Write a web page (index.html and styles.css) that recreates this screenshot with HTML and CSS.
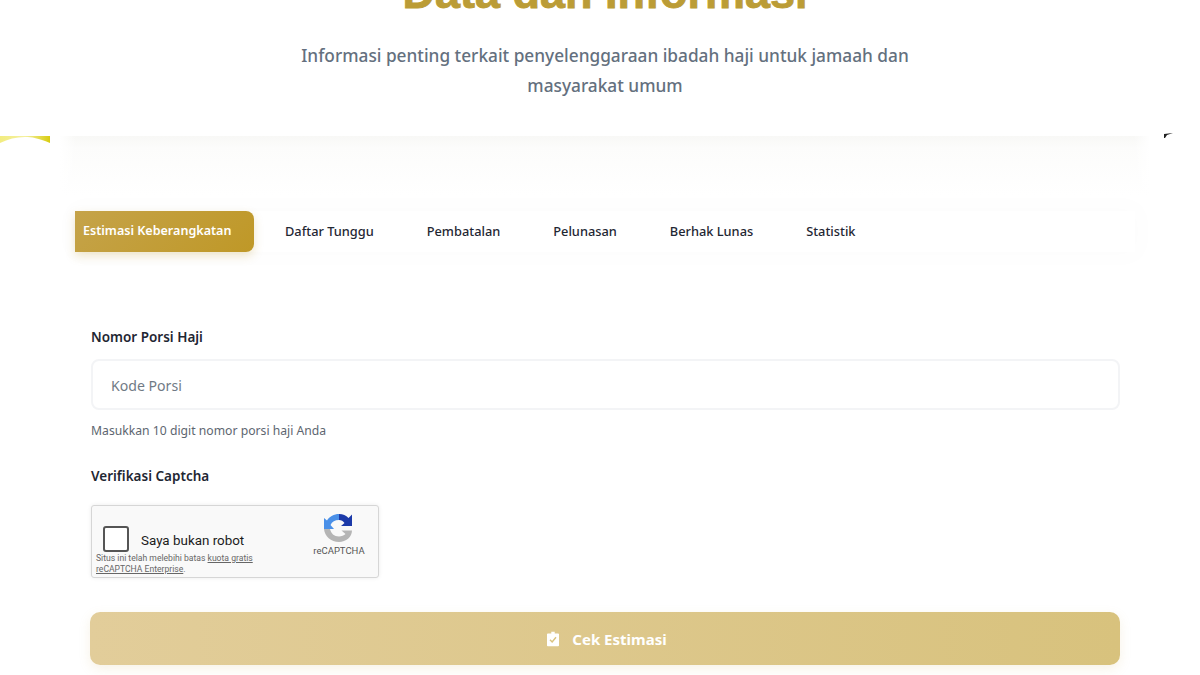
FILE: index.html
```html
<!DOCTYPE html>
<html lang="id">
<head>
<meta charset="utf-8">
<title>Data dan Informasi</title>
<link rel="stylesheet" href="styles.css">
</head>
<body>
<header class="hero">
  <h1 class="hero-title">Data dan Informasi</h1>
  <p class="hero-sub">Informasi penting terkait penyelenggaraan ibadah haji untuk jamaah dan<br>masyarakat umum</p>
</header>
<svg class="wave wave-left" width="50" height="9" viewBox="0 0 50 9"><defs><linearGradient id="wv" x1="0" x2="1" y1="0" y2="0"><stop offset="0" stop-color="#f2ec80"/><stop offset=".5" stop-color="#f4f0a0"/><stop offset="1" stop-color="#d8cc10"/></linearGradient></defs><path d="M0 0H50V7C38 2 32 1 25 1 16 1 8 3 0 7Z" fill="url(#wv)"/></svg>
<svg class="wave wave-right" width="9" height="6" viewBox="0 0 9 6"><path d="M0 1L9 0 3 2 1 5 0 5Z" fill="#222"/></svg>
<main class="panel">
  <nav class="tabs">
    <span class="tab tab-active">Estimasi Keberangkatan</span>
    <span class="tab tab-a">Daftar Tunggu</span>
    <span class="tab">Pembatalan</span>
    <span class="tab">Pelunasan</span>
    <span class="tab">Berhak Lunas</span>
    <span class="tab">Statistik</span>
  </nav>
  <form class="form">
    <label class="label" for="porsi">Nomor Porsi Haji</label>
    <input class="input" id="porsi" type="text" placeholder="Kode Porsi">
    <p class="hint">Masukkan 10 digit nomor porsi haji Anda</p>
    <div class="label label-captcha">Verifikasi Captcha</div>
    <div class="captcha">
      <div class="captcha-main">
        <div class="captcha-row"><span class="checkbox"></span><span class="robot">Saya bukan robot</span></div>
        <p class="quota">Situs ini telah melebihi batas <u>kuota gratis</u><br><u>reCAPTCHA Enterprise</u>.</p>
      </div>
      <div class="captcha-logo">
        <svg width="32" height="30" viewBox="0 0 32 30">
          <path d="M16 1C11 1 6.500 3.500 4 7.500L1 5V16H11L7.500 12C9 8.500 12 7 16 7Z" fill="#4a90e8"/>
          <path d="M16 1C20 1 23 2.500 25.500 5L29 1.500V13H18L21.500 10C20 8 18.500 7 16 7Z" fill="#1c3aa9"/>
          <path d="M1 16H7C8 20.500 11 23.500 16 23.500 18.500 23.500 21 22.500 22.500 21L18.500 17.500H29C29 24 23 29 16 29 8 29 1.500 23 1 16Z" fill="#b5b5b5"/>
        </svg>
        <span class="captcha-name">reCAPTCHA</span>
      </div>
    </div>
    <button class="submit" type="button">
      <svg width="12" height="16" viewBox="0 0 14 17"><path d="M5 0H9V2H13C13.600 2 14 2.400 14 3V16C14 16.600 13.600 17 13 17H1C.4 17 0 16.600 0 16V3C0 2.400.4 2 1 2H5Z" fill="#fff"/><path d="M3.500 9.500L6 12 10.500 6.500" fill="none" stroke="#d9c37f" stroke-width="1.700"/></svg>
      <span>Cek Estimasi</span>
    </button>
  </form>
</main>
</body>
</html>
```
FILE: styles.css
```css
* { box-sizing: border-box; }
html, body { margin: 0; height: 675px; overflow: hidden; background: #fff; }
body { font-family: "Noto Sans", "Open Sans", sans-serif; color: #1f2933; position: relative; }

.hero { height: 136px; text-align: center; padding-left: 10px; overflow: hidden; }
.hero-title {
  margin: -31px auto 0;
  font: 700 45px/48px "Liberation Sans", Arial, sans-serif;
  width: max-content;
  color: #bb9c36;
  -webkit-text-stroke: .9px #bb9c36;
}
.hero-sub { margin: 24px 0 0; font-size: 17.250px; line-height: 30px; font-weight: 500; color: #64707e; }

.wave { position: absolute; top: 136px; }
.wave-left { left: 0; }
.wave-right { left: 1164px; top: 133px; }

.panel {
  margin: 0 50px 0 60px;
  height: 539px;
  padding: 75px 15px 0;
  background:
    linear-gradient(90deg, #fff, rgba(255, 255, 255, 0) 16px, rgba(255, 255, 255, 0) calc(100% - 16px), #fff),
    linear-gradient(180deg, #f8f8f6 0, #fcfcfb 12px, #fff 60px);
}
.tabs {
  display: flex; align-items: center; height: 41px;
  box-shadow: 0 0 24px 8px #fdfdfd;
}
.tab { padding: 0 26.500px; font-size: 12.800px; font-weight: 500; line-height: 39px; color: #1f2733; white-space: nowrap; }
.tab-a { padding-left: 31px; }
.tab-active {
  display: flex; align-items: center; height: 41px; width: 179px; padding: 0 0 2px 8px;
  color: #fff; font-size: 12.550px; font-weight: 600; border-radius: 0 8px 8px 0;
  background: linear-gradient(135deg, #c5a349, #bf9827);
  box-shadow: 0 4px 10px rgba(190, 155, 50, .25);
}

.form { display: flex; flex-direction: column; align-items: flex-start; padding: 0 15px; margin-top: 74px; }
.label { font-size: 13.500px; line-height: 22px; font-weight: 600; color: #1f2733; margin-left: 1px; }
.input {
  width: calc(100% - 1px); height: 51px; margin: 11px 0 0 1px; padding: 2px 18px 0;
  border: 2px solid #f3f4f6; border-radius: 8px; background: #fff;
  font: 400 14.100px "Noto Sans", sans-serif; outline: none;
}
.input::placeholder { color: #707a85; opacity: 1; }
.hint { margin: 12px 0 0 1px; font-size: 12.200px; line-height: 18px; color: #5d6670; }
.label-captcha { margin-top: 25px; }

.captcha {
  display: flex; justify-content: space-between; width: 288px; height: 73px; margin: 18px 0 0 1px;
  background: #f9f9f9; border: 1px solid #d6d6d6; border-radius: 3px;
  box-shadow: 0 0 4px rgba(0, 0, 0, .08);
  font-family: Roboto, "Liberation Sans", sans-serif;
}
.captcha-main { padding: 20px 0 0 4px; }
.captcha-row { display: flex; align-items: center; margin-left: 7px; height: 26px; }
.checkbox { width: 26px; height: 26px; background: #fff; border: 2px solid #555; border-radius: 3px; }
.robot { margin-left: 12px; margin-top: 3px; font-size: 13.400px; color: #1c1c1c; }
.quota { margin: 1px 0 0; font-size: 8.600px; line-height: 10.500px; color: #666; }
.captcha-logo { display: flex; flex-direction: column; align-items: center; width: 66px; margin-right: 6px; padding-top: 7px; }
.captcha-name { font-size: 9.500px; line-height: 12px; margin-top: 2px; color: #555; }

.submit {
  display: flex; align-items: center; justify-content: center; gap: 13px;
  width: 100%; height: 53px; margin-top: 34px; padding: 0 0 0 4px; border: 0; border-radius: 10px;
  background: linear-gradient(90deg, #e2cd9a, #d8c27d);
  box-shadow: 0 4px 12px rgba(200, 170, 90, .15);
  color: #fff; font: 700 15px "Noto Sans", sans-serif;
}
```
